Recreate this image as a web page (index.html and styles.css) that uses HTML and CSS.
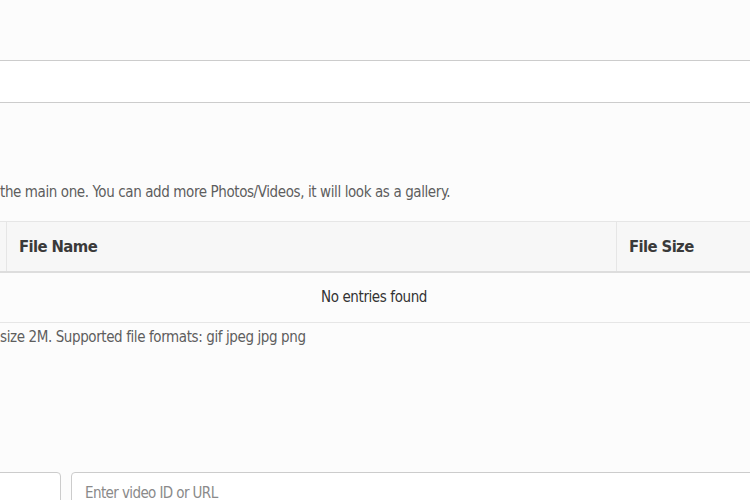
FILE: index.html
```html
<!DOCTYPE html>
<html>
<head>
  <title>Media Upload</title>
  <link rel="stylesheet" href="styles.css">
</head>
<body>
  <div class="page">
    <div class="field-top">
      <input type="text" class="text-input wide-input">
    </div>

    <p class="help-text lead">the main one. You can add more Photos/Videos, it will look as a gallery.</p>

    <table class="files-table">
      <thead>
        <tr>
          <th class="col-check"></th>
          <th class="col-name">File Name</th>
          <th class="col-size">File Size</th>
        </tr>
      </thead>
      <tbody>
        <tr>
          <td colspan="3" class="empty">No entries found</td>
        </tr>
      </tbody>
    </table>

    <p class="help-text limits">size 2M. Supported file formats: gif jpeg jpg png</p>

    <div class="video-row">
      <input type="text" class="text-input provider-input">
      <input type="text" class="text-input video-input" placeholder="Enter video ID or URL">
    </div>
  </div>
</body>
</html>
```

FILE: styles.css
```css
body {
  font-family: "DejaVu Sans Condensed", "Liberation Sans", sans-serif;
  background-color: #fcfcfc;
  color: #555555;
  margin: 0;
  padding: 0;
  overflow: hidden;
}

.page {
  padding-top: 60px;
}

.field-top {
  margin: 0 -10px;
}

.text-input {
  display: block;
  box-sizing: border-box;
  height: 43px;
  padding: 6px 13px;
  border: 1px solid #cccccc;
  border-radius: 4px;
  background-color: #ffffff;
  font-family: inherit;
  font-size: 15px;
  letter-spacing: -0.6px;
  color: #555555;
}

.text-input::placeholder {
  color: #8a8a8a;
}

.wide-input {
  width: 100%;
  border-left: none;
  border-right: none;
  border-radius: 0;
}

.help-text {
  margin: 0;
  font-size: 15px;
  line-height: 22px;
  letter-spacing: -0.4px;
  color: #5e5e5e;
}

.lead {
  margin-top: 78px;
}

.files-table {
  margin-top: 18px;
  margin-left: -41px;
  width: 830px;
  table-layout: fixed;
  border-collapse: collapse;
}

.files-table th {
  height: 49px;
  padding: 0 12px;
  text-align: left;
  font-size: 16.5px;
  letter-spacing: -0.6px;
  font-weight: bold;
  color: #3a3a3a;
  background-color: #f7f7f7;
  border-top: 1px solid #e6e6e6;
  border-bottom: 2px solid #dddddd;
  border-left: 1px solid #e6e6e6;
}

.files-table th.col-check {
  width: 23px;
  border-left: none;
}

.files-table th.col-name {
  width: 585px;
}

.files-table td.empty {
  height: 50px;
  padding: 0;
  text-align: center;
  font-size: 15px;
  letter-spacing: -0.4px;
  color: #333333;
  border-bottom: 1px solid #e6e6e6;
  box-sizing: border-box;
}

.limits {
  margin-top: 3px;
}

.video-row {
  display: flex;
  gap: 10px;
  margin-top: 124px;
  margin-left: -40px;
}

.provider-input {
  width: 101px;
}

.video-input {
  flex: 1;
  margin-right: -20px;
}
```
